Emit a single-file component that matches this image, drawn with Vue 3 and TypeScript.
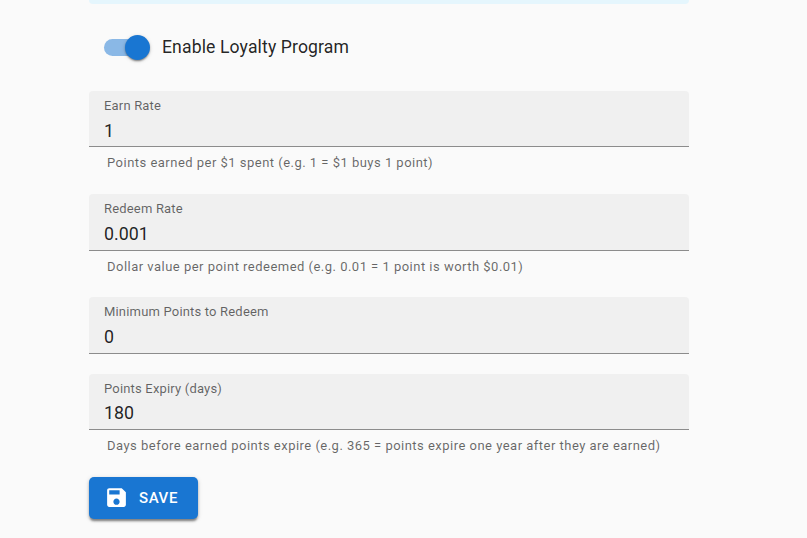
<script setup lang="ts">
interface Field {
  label: string
  value: string
  help?: string
}

const fields: Field[] = [
  { label: 'Earn Rate', value: '1', help: 'Points earned per $1 spent (e.g. 1 = $1 buys 1 point)' },
  { label: 'Redeem Rate', value: '0.001', help: 'Dollar value per point redeemed (e.g. 0.01 = 1 point is worth $0.01)' },
  { label: 'Minimum Points to Redeem', value: '0' },
  { label: 'Points Expiry (days)', value: '180', help: 'Days before earned points expire (e.g. 365 = points expire one year after they are earned)' },
]
</script>

<template>
  <main class="page">
    <div class="alert"></div>
    <label class="switch-row">
      <span class="switch">
        <span class="track"></span>
        <span class="thumb"></span>
      </span>
      <span class="switch-label">Enable Loyalty Program</span>
    </label>
    <div class="fields">
      <div v-for="f in fields" :key="f.label" class="field">
        <div class="box">
          <span class="label">{{ f.label }}</span>
          <span class="value">{{ f.value }}</span>
        </div>
        <p v-if="f.help" class="help">{{ f.help }}</p>
      </div>
    </div>
    <button class="save" type="button">
      <svg class="icon" viewBox="0 0 24 24" width="25" height="25" aria-hidden="true">
        <path fill="currentColor" d="M17 3H5c-1.11 0-2 .9-2 2v14c0 1.1.89 2 2 2h14c1.1 0 2-.9 2-2V7l-4-4zm-5 16c-1.66 0-3-1.34-3-3s1.34-3 3-3 3 1.34 3 3-1.34 3-3 3zm3-10H5V5h10v4z" />
      </svg>
      <span>SAVE</span>
    </button>
  </main>
</template>

<style>
html, body {
  margin: 0;
  background: #fafafa;
}
</style>

<style scoped>
.page {
  width: 807px;
  height: 538px;
  box-sizing: border-box;
  padding-left: 89px;
  overflow: hidden;
  background: #fafafa;
  font-family: Roboto, "Liberation Sans", sans-serif;
}
.alert {
  width: 600px;
  height: 4px;
  background: #e5f6fd;
  border-radius: 0 0 4px 4px;
}
.switch-row {
  display: flex;
  align-items: center;
  height: 86.9px;
  padding-left: 15px;
  box-sizing: border-box;
}
.switch {
  position: relative;
  display: block;
  width: 46px;
  height: 25px;
  margin-right: 12px;
}
.track {
  position: absolute;
  left: 0;
  top: 4px;
  width: 42px;
  height: 17px;
  border-radius: 9px;
  background: #1976d2;
  opacity: 0.5;
}
.thumb {
  position: absolute;
  left: 21px;
  top: 0;
  width: 25px;
  height: 25px;
  border-radius: 50%;
  background: #1976d2;
  box-shadow: 0 2px 2px -1px rgba(0,0,0,.3), 0 1px 2px rgba(0,0,0,.2), 0 1px 4px rgba(0,0,0,.14);
}
.switch-label {
  margin-top: -1px;
  font-size: 17.6px;
  line-height: 24px;
  color: rgba(0,0,0,.87);
  letter-spacing: 0.12px;
}
.fields {
  width: 600px;
}
.field {
  margin-bottom: 20px;
}
.box {
  box-sizing: border-box;
  height: 56.5px;
  padding: 7px 15px 0;
  background: #f0f0f0;
  border-radius: 4px 4px 0 0;
  border-bottom: 1px solid #8c8c8c;
}
.label {
  display: block;
  font-size: 13px;
  line-height: 16px;
  color: rgba(0,0,0,.6);
  letter-spacing: 0.18px;
}
.value {
  display: block;
  margin-top: 4.65px;
  font-size: 17.8px;
  line-height: 24px;
  color: rgba(0,0,0,.87);
}
.help {
  margin: 0;
  height: 26.7px;
  box-sizing: border-box;
  padding: 7px 18px 0;
  font-size: 13px;
  line-height: 18px;
  letter-spacing: 0.48px;
  color: rgba(0,0,0,.6);
}
.save {
  display: flex;
  align-items: center;
  gap: 10px;
  width: 109px;
  height: 42px;
  padding: 0 0 0 15px;
  border: 0;
  border-radius: 5px;
  background: #1976d2;
  color: #fff;
  font: 500 15px Roboto, "Liberation Sans", sans-serif;
  letter-spacing: 0.6px;
  box-shadow: 0 3px 2px -1px rgba(0,0,0,.3), 0 2px 3px rgba(0,0,0,.2), 0 1px 5px rgba(0,0,0,.14);
}
.icon {
  flex: none;
}
</style>
